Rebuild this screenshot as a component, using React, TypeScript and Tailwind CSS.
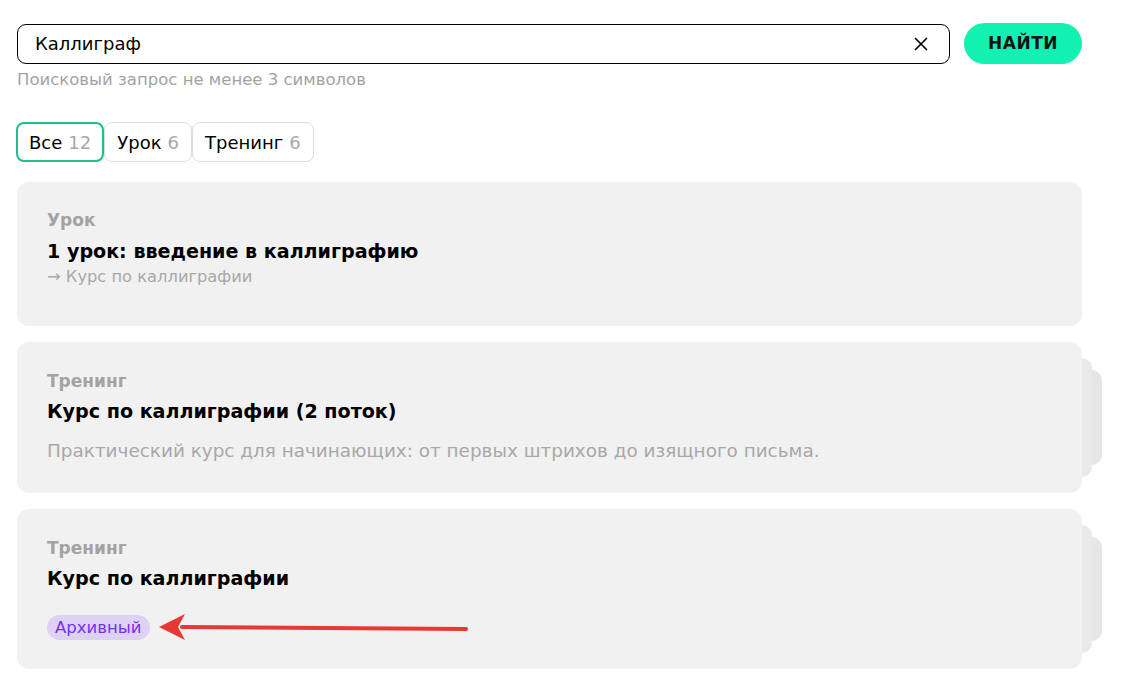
import React from "react";

const font = { fontFamily: "'DejaVu Sans', Inter, sans-serif" };

function Stack() {
  return (
    <>
      <div className="absolute right-[-10px] top-[16px] bottom-[16px] w-[20px] rounded-r-[10px] bg-[#e9e9e9] -z-10" />
      <div className="absolute right-[-20px] top-[28px] bottom-[28px] w-[30px] rounded-r-[10px] bg-[#e6e6e6] -z-20" />
    </>
  );
}

export default function App() {
  return (
    <div className="min-h-[684px] bg-white text-black" style={font}>
      <div className="w-[1065px] ml-[17px] pt-[23px]">
        <div className="flex items-center gap-[14px]">
          <div className="flex-1 h-[40px] rounded-[9px] border border-black flex items-center pl-[17px] pr-[18px]">
            <span className="flex-1 text-[18px] leading-none">Каллиграф</span>
            <svg width="14" height="14" viewBox="0 0 14 14" className="mr-[3px]">
              <path d="M1.5 1.5 L12.5 12.5 M12.5 1.5 L1.5 12.5" stroke="black" strokeWidth="1.7" strokeLinecap="round" />
            </svg>
          </div>
          <button className="w-[118px] h-[41px] rounded-full bg-[#13f1b2] text-[17px] font-extrabold tracking-[0.5px] text-[#111]">
            НАЙТИ
          </button>
        </div>
        <div className="mt-[6px] text-[16.5px] text-[#a3a3a3] leading-[20px]">Поисковый запрос не менее 3 символов</div>

        <div className="flex mt-[32px] ml-[-1px]">
          <div className="h-[40px] px-[11px] flex items-center rounded-[8px] border-2 border-[#1dbf8c] text-[18px]">
            Все<span className="ml-[6px] text-[#a8a8a8]">12</span>
          </div>
          <div className="h-[40px] px-[12px] flex items-center rounded-[8px] border border-[#dddddd] text-[18px]">
            Урок<span className="ml-[6px] text-[#a8a8a8]">6</span>
          </div>
          <div className="h-[40px] px-[12px] flex items-center rounded-[8px] border border-[#dddddd] text-[18px]">
            Тренинг<span className="ml-[6px] text-[#a8a8a8]">6</span>
          </div>
        </div>

        <div className="flex flex-col gap-[16px] mt-[20px] isolate">
          <div className="rounded-[12px] bg-[#f1f1f1] pl-[30px] pt-[28px] h-[144px]">
            <div className="text-[17px] font-bold text-[#a3a3a3] leading-[20px]">Урок</div>
            <div className="text-[19.1px] font-bold leading-[26px] mt-[9px]">1 урок: введение в каллиграфию</div>
            <div className="text-[16.3px] text-[#a8a8a8] leading-[20px] mt-[2px]">→ Курс по каллиграфии</div>
          </div>

          <div className="relative rounded-[12px] bg-[#f1f1f1] pl-[30px] pt-[29px] h-[151px]">
            <Stack />
            <div className="text-[17px] font-bold text-[#a3a3a3] leading-[20px]">Тренинг</div>
            <div className="text-[19.1px] font-bold leading-[26px] mt-[8px]">Курс по каллиграфии (2 поток)</div>
            <div className="text-[18.4px] text-[#a8a8a8] leading-[22px] mt-[15px]">
              Практический курс для начинающих: от первых штрихов до изящного письма.
            </div>
          </div>

          <div className="relative rounded-[12px] bg-[#f1f1f1] pl-[30px] pt-[29px] h-[160px]">
            <Stack />
            <div className="text-[17px] font-bold text-[#a3a3a3] leading-[20px]">Тренинг</div>
            <div className="text-[19.1px] font-bold leading-[26px] mt-[8px]">Курс по каллиграфии</div>
            <div className="flex items-center mt-[20px]">
              <span className="h-[25px] px-[8px] rounded-full bg-[#ddd1f6] text-[#7a2ff0] text-[16.5px] leading-[25px]">Архивный</span>
              <svg width="320" height="30" viewBox="0 0 320 30" className="ml-[6px]">
                <path d="M26 15 L310 17" stroke="#e53935" strokeWidth="4" strokeLinecap="round" />
                <path d="M3 15 L29 2 L22 15 L29 28 Z" fill="#e53935" />
              </svg>
            </div>
          </div>
        </div>
      </div>
    </div>
  );
}
